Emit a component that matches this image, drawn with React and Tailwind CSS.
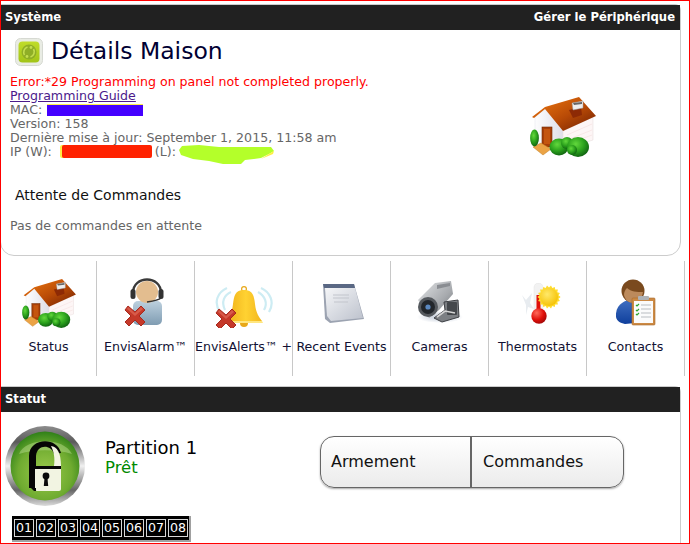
const Cross = ({ x, y, s = 1 }) => (
  <g transform={`translate(${x} ${y}) scale(${s})`}>
    <path d="M-7-10-0-4 6-10 10-6 4 0 10 6 6 10 0 4-6 10-10 6-4 0-10-6Z" fill="#c5392a" stroke="#a82a1e" strokeWidth="1" strokeLinejoin="round" />
    <path d="M-7-9 0-3 6-9 8-7 0 0-8-7Z" fill="#e06a58" opacity=".7" />
  </g>
);

const House = ({ w, h }) => (
  <svg width={w} height={h} viewBox="0 0 66 60">
    <defs>
      <linearGradient id="roof" x1="0" y1="0" x2="1" y2="1">
        <stop offset="0" stopColor="#f07a10" />
        <stop offset=".55" stopColor="#b84a06" />
        <stop offset="1" stopColor="#6e1e02" />
      </linearGradient>
      <linearGradient id="gable" x1="0" y1="0" x2="1" y2="0">
        <stop offset="0" stopColor="#fdfdfe" />
        <stop offset="1" stopColor="#dedee8" />
      </linearGradient>
      <radialGradient id="bush" cx=".4" cy=".35" r=".7">
        <stop offset="0" stopColor="#62d83c" />
        <stop offset=".55" stopColor="#2aa01c" />
        <stop offset="1" stopColor="#0e5c10" />
      </radialGradient>
    </defs>
    <path d="M5 20 15 12 33 34 33 52 5 47Z" fill="url(#gable)" stroke="#e2e2e8" strokeWidth=".5" />
    <path d="M33 34 63 20 63 43 33 52Z" fill="#fdf6f6" stroke="#eadfdf" strokeWidth=".6" />
    <path d="M37 38 62 27M37 43 62 33M37 47 62 38" stroke="#f2d8d8" strokeWidth=".5" />
    <path d="M2 20 15 10 49 0 66 19 33 34 15 12 4 21Z" fill="url(#roof)" />
    <path d="M39 13 51 10 52 18 43 21Z" fill="#8d2a05" />
    <path d="M42 6 53 4 53 11 43 13Z" fill="#eeeeee" stroke="#999" strokeWidth=".5" />
    <path d="M43 6 52 5 52 7 44 8Z" fill="#666" />
    <rect x="12" y="30" width="10" height="20" fill="#a83f08" stroke="#6e2a04" strokeWidth=".6" />
    <path d="M14 32h6v15h-6Z" fill="#c4550f" />
    <path d="M3 50 11 46 21 52 13 58Z" fill="#eba345" stroke="#c07c20" strokeWidth=".5" />
    <ellipse cx="4.5" cy="41" rx="4.4" ry="8.5" fill="url(#bush)" />
    <ellipse cx="29" cy="50" rx="9.5" ry="8.5" fill="url(#bush)" />
    <circle cx="37" cy="46" r="6" fill="url(#bush)" />
    <ellipse cx="48" cy="50" rx="11" ry="10" fill="url(#bush)" />
    <circle cx="42" cy="53" r="5" fill="url(#bush)" />
  </svg>
);

const Support = () => (
  <svg width="40" height="50" viewBox="0 0 40 50" className="-ml-[4px]">
    <defs>
      <linearGradient id="shirt" x1="0" y1="0" x2="0" y2="1">
        <stop offset="0" stopColor="#bcd0de" />
        <stop offset="1" stopColor="#7f9cb2" />
      </linearGradient>
    </defs>
    <rect x="9" y="23" width="29" height="24" rx="5" fill="url(#shirt)" />
    <circle cx="23" cy="14" r="11" fill="#e3bd8f" />
    <path d="M9 15C9-3 37-3 37 15" fill="none" stroke="#3a3a3a" strokeWidth="2.4" />
    <rect x="6.5" y="11" width="5" height="10" rx="2.5" fill="#333" />
    <rect x="34.5" y="11" width="5" height="10" rx="2.5" fill="#333" />
    <path d="M37 20C35 22 30 23 23 24" fill="none" stroke="#333" strokeWidth="1.4" />
    <Cross x={11} y={38} />
  </svg>
);

const Bell = () => (
  <svg width="58" height="42" viewBox="0 0 58 42">
    <defs>
      <linearGradient id="bell" x1="0" y1="0" x2="1" y2="0">
        <stop offset="0" stopColor="#eeae18" />
        <stop offset=".55" stopColor="#ffd232" />
        <stop offset="1" stopColor="#f2b61e" />
      </linearGradient>
    </defs>
    <g fill="none" stroke="#cdecf3" strokeWidth="2.2">
      <path d="M5 26C-2 16 3 6 12 2" />
      <path d="M10 24C6 16 9 9 16 6" />
      <path d="M54 26C60 16 55 6 46 2" />
      <path d="M49 24C53 17 50 10 43 6" />
    </g>
    <circle cx="29" cy="37" r="4" fill="#e8a818" />
    <circle cx="29" cy="3" r="2.4" fill="none" stroke="#e8a818" strokeWidth="1.2" />
    <path d="M29 4C20 4 19 10 18 18 17 27 14 31 11 35H47C44 31 41 27 40 18 39 10 38 4 29 4Z" fill="url(#bell)" />
    <path d="M11 35H47L48 37H10Z" fill="#ffe680" />
    <Cross x={11} y={33} />
  </svg>
);

const Doc = () => (
  <svg width="44" height="42" viewBox="0 0 44 42" className="ml-[4px]">
    <defs>
      <linearGradient id="paper" x1="0" y1="0" x2="1" y2="1">
        <stop offset="0" stopColor="#f5f6f8" />
        <stop offset="1" stopColor="#bcc1cc" />
      </linearGradient>
    </defs>
    <path d="M1 1H32L42 36 8 40 3 36Z" fill="#9ca3b1" />
    <path d="M3 5H33L41 35 9 38 5 33Z" fill="url(#paper)" />
    <path d="M1 1H32L33 5H2Z" fill="#5a6884" />
    <path d="M11 12H27M11 15H27M12 19H26" stroke="#c2c5cc" strokeWidth="1" />
  </svg>
);

const Camera = () => (
  <svg width="46" height="44" viewBox="0 0 46 44">
    <defs>
      <linearGradient id="cam" x1="0" y1="0" x2="1" y2="1">
        <stop offset="0" stopColor="#e4e6e8" />
        <stop offset=".6" stopColor="#a6a9ad" />
        <stop offset="1" stopColor="#6a6e73" />
      </linearGradient>
      <radialGradient id="shade" cx=".5" cy=".5" r=".5">
        <stop offset="0" stopColor="#8e9fb8" stopOpacity=".6" />
        <stop offset="1" stopColor="#8e9fb8" stopOpacity="0" />
      </radialGradient>
    </defs>
    <ellipse cx="23" cy="37" rx="23" ry="6" fill="url(#shade)" />
    <path d="M1 20 18 3 34 1 36 14 22 30 12 38Z" fill="url(#cam)" />
    <path d="M20 5 33 3V6L20 9Z" fill="#8a8d92" />
    <circle cx="11" cy="27" r="10" fill="#55595e" />
    <circle cx="11" cy="27" r="7" fill="#22262b" />
    <circle cx="11" cy="27" r="2.6" fill="#5a88c0" />
    <path d="M17 38 28 30 27 22 41 20 42 37 25 42Z" fill="#7c7f83" stroke="#3e4044" strokeWidth="1" />
    <rect x="30" y="22" width="10" height="13" rx="1" fill="#44474b" />
    <path d="M20 37 28 31 38 33" stroke="#d4d4d4" strokeWidth="1.6" fill="none" />
  </svg>
);

const Thermo = () => {
  const pts = Array.from({ length: 36 }, (_, i) => {
    const r = i % 2 ? 9.6 : 11.6;
    const a = (i * Math.PI) / 18;
    return `${(36 + r * Math.cos(a)).toFixed(1)},${(14 + r * Math.sin(a)).toFixed(1)}`;
  }).join(" ");
  return (
    <svg width="50" height="44" viewBox="0 0 50 44">
      <defs>
        <radialGradient id="sun" cx=".4" cy=".35" r=".7">
          <stop offset="0" stopColor="#ffe96a" />
          <stop offset="1" stopColor="#f5c000" />
        </radialGradient>
        <radialGradient id="bulb" cx=".35" cy=".3" r=".75">
          <stop offset="0" stopColor="#ff6a5a" />
          <stop offset=".6" stopColor="#e0100a" />
          <stop offset="1" stopColor="#a00808" />
        </radialGradient>
      </defs>
      <path d="M9 12 13 17 19 10 17 20 21 26 15 24 13 32 13 22Z" fill="#e8ecf0" />
      <rect x="21" y="0" width="9" height="30" rx="4.5" fill="#f2f2f2" stroke="#e4e4e4" strokeWidth=".5" />
      <rect x="23.5" y="12" width="4" height="20" fill="#e0100a" />
      <circle cx="26" cy="33" r="7.7" fill="url(#bulb)" />
      <polygon points={pts} fill="#ffdc2e" />
      <circle cx="36" cy="14" r="9" fill="url(#sun)" />
    </svg>
  );
};

const Contact = () => (
  <svg width="42" height="48" viewBox="0 0 42 48">
    <defs>
      <linearGradient id="suit" x1="0" y1="0" x2="0" y2="1">
        <stop offset="0" stopColor="#3f6ec0" />
        <stop offset="1" stopColor="#0f3f9c" />
      </linearGradient>
    </defs>
    <path d="M1 39C0 28 8 23 14 22H26L30 44 10 46C5 45 2 43 1 39Z" fill="url(#suit)" />
    <circle cx="18" cy="13" r="11.5" fill="#7a4a1e" />
    <path d="M9 17C10 22 14 25 18 25 23 25 27 21 28 14 22 14 16 14 12 10 10 12 9 14 9 17Z" fill="#bc8a5c" />
    <rect x="17" y="20" width="23" height="27" rx="1" fill="#cc8a45" stroke="#a86a2a" strokeWidth=".6" />
    <rect x="19" y="23" width="19" height="22" fill="#fbfbfb" />
    <rect x="23" y="18" width="11" height="4" rx="1" fill="#aeb2b6" />
    <path d="M26 27H36M26 31H36M26 35H36M26 39H36" stroke="#b9bdc1" strokeWidth="1" />
    <path d="M21 27 22 28 24 26M21 32 22 33 24 31M21 36 22 37 24 35" stroke="#2fa52f" strokeWidth="1.2" fill="none" />
  </svg>
);

const Lock = () => (
  <svg width="80" height="80" viewBox="0 0 80 80">
    <defs>
      <linearGradient id="ring" x1="0" y1="0" x2="0" y2="1">
        <stop offset="0" stopColor="#8c8c8c" />
        <stop offset=".2" stopColor="#5a5a5a" />
        <stop offset=".5" stopColor="#f0f0f0" />
        <stop offset=".8" stopColor="#666" />
        <stop offset="1" stopColor="#dcdcdc" />
      </linearGradient>
      <radialGradient id="grn" cx=".5" cy=".6" r=".6">
        <stop offset="0" stopColor="#9ccb4c" />
        <stop offset=".65" stopColor="#6fab30" />
        <stop offset="1" stopColor="#2f8018" />
      </radialGradient>
    </defs>
    <circle cx="40" cy="40" r="40" fill="url(#ring)" />
    <circle cx="40" cy="40" r="34.5" fill="url(#grn)" />
    <path d="M14 28C20 12 58 10 67 28 50 23 30 23 14 28Z" fill="#b5d98a" opacity=".5" />
    <path d="M24 62V30C24 12 52 10 56 27L49 28C46 18 32 18 31 30V62Z" fill="#060606" />
    <path d="M46 20C52 21 56 26 56 40H49C50 32 49 26 46 20Z" fill="#f2f4e2" />
    <rect x="28" y="40" width="28" height="3" fill="#060606" />
    <path d="M30 43H56V63C56 64 55 65 54 65H32C31 65 30 64 30 63Z" fill="#f2f4e2" />
    <path d="M26 62H31V65H29Z" fill="#060606" />
    <circle cx="41" cy="50" r="3.4" fill="#0a0a0a" />
    <path d="M39.6 51H42.4L43.2 60H38.8Z" fill="#0a0a0a" />
  </svg>
);

const Apps = () => (
  <svg width="28" height="28" viewBox="0 0 28 28">
    <defs>
      <linearGradient id="app" x1="0" y1="0" x2="0" y2="1">
        <stop offset="0" stopColor="#c0dc2a" />
        <stop offset="1" stopColor="#a2c418" />
      </linearGradient>
    </defs>
    <rect x=".5" y=".5" width="27" height="27" rx="5" fill="#e9ece4" stroke="#d6d9d2" />
    <rect x="3.5" y="3.5" width="21" height="21" rx="4" fill="url(#app)" />
    <circle cx="14" cy="14" r="7.5" fill="#8fae26" />
    <path d="M12.5 9A5.5 5.5 0 0 0 9.5 17M15.5 19A5.5 5.5 0 0 0 18.5 11" fill="none" stroke="#c4de50" strokeWidth="1.6" />
    <circle cx="16" cy="9.5" r="1.4" fill="#c4de50" />
    <circle cx="12" cy="18.5" r="1.4" fill="#c4de50" />
  </svg>
);

const GreenScribble = () => (
  <svg width="96" height="20" viewBox="0 0 96 20" className="inline-block align-top">
    <path d="M0 5 3 1 20 0 40 2 60 2 92 2 95 6 90 9 82 13 66 15 62 19 44 19 30 16 14 14 2 10Z" fill="#b4ff2a" />
    <path d="M90 9 95 6 94 9 82 14Z" fill="#ffee44" />
  </svg>
);

const NAV = [
  { label: "Status", icon: <House w={54} h={49} />, pad: "pt-[18px]", w: "w-[96px]" },
  { label: "EnvisAlarm™", icon: <Support />, pad: "pt-[17px]", w: "w-[98px]" },
  { label: "EnvisAlerts™ +", icon: <Bell />, pad: "pt-[25px]", w: "w-[98px]" },
  { label: "Recent Events", icon: <Doc />, pad: "pt-[22px]", w: "w-[98px]" },
  { label: "Cameras", icon: <Camera />, pad: "pt-[19px]", w: "w-[98px]" },
  { label: "Thermostats", icon: <Thermo />, pad: "pt-[22px]", w: "w-[98px]" },
  { label: "Contacts", icon: <Contact />, pad: "pt-[17px]", w: "w-[98px]" },
];

const ZONES = ["01", "02", "03", "04", "05", "06", "07", "08"];

export default function App() {
  return (
    <div className="w-[690px] h-[544px] border border-[#ff0000] bg-white overflow-hidden font-['DejaVu_Sans',Verdana,sans-serif]">
      <section className="relative -ml-px mt-[3px] w-[681px] h-[252px] border border-[#cccccc] rounded-b-[14px] rounded-tr-[6px]">
        <div className="h-[25px] bg-[#212121] flex items-center justify-between pt-[1px] pl-[4px] pr-[5px] text-[11.6px] font-bold text-white">
          <span>Système</span>
          <span>Gérer le Périphérique</span>
        </div>
        <div className="flex items-center pl-[14px] pt-[8px] h-[36px]">
          <Apps />
          <h1 className="ml-[8px] -mt-[3px] text-[23.5px] leading-[28px] text-[#000033]">Détails Maison</h1>
        </div>
        <div className="mt-[9px] pl-[9px] text-[12.6px] leading-[14px] text-[#666666]">
          <div className="text-[#ff0000]">Error:*29 Programming on panel not completed properly.</div>
          <div className="text-[#4b1a8b] underline">Programming Guide</div>
          <div className="flex items-center h-[14px]">
            MAC:
            <span className="ml-[5px] w-[96px] h-[11px] bg-[#4400ff] shadow-[0_-1px_0_#ffee44]" />
          </div>
          <div>Version: 158</div>
          <div>Dernière mise à jour: September 1, 2015, 11:58 am</div>
          <div className="flex h-[14px]">
            IP (W):
            <span className="ml-[10px] w-[90px] h-[13px] bg-[#ff2200] rounded-[2px] shadow-[-2px_0_0_#ffee44]" />
            <span className="ml-[3px]">(L):</span>
            <span className="ml-[3px] h-[20px]"><GreenScribble /></span>
          </div>
        </div>
        <div className="mt-[27px] pl-[14px] text-[14px] leading-[18px] text-[#111111]">Attente de Commandes</div>
        <div className="mt-[15px] pl-[9px] text-[12.6px] leading-[14px] text-[#666666]">Pas de commandes en attente</div>
        <div className="absolute left-[529px] top-[92px]">
          <House w={66} h={60} />
        </div>
      </section>

      <nav className="mt-[5px] flex h-[115px]">
        {NAV.map((n) => (
          <div key={n.label} className={`${n.w} shrink-0 border-r border-[#c8c8c8] flex flex-col items-center`}>
            <div className={`h-[78px] ${n.pad} flex justify-center`}>{n.icon}</div>
            <div className="mt-[1px] text-[12.6px] leading-[14px] whitespace-nowrap text-[#111133]">{n.label}</div>
          </div>
        ))}
      </nav>

      <section className="-ml-px mt-[10px] w-[681px] h-[170px] border-t border-r border-[#cccccc] rounded-tr-[6px]">
        <div className="h-[25px] bg-[#212121] flex items-center pt-[1px] pl-[5px] text-[11.6px] font-bold text-white">Statut</div>
        <div className="flex pl-[5px] pt-[14px]">
          <Lock />
          <div className="w-[235px] pl-[20px] pt-[12px] shrink-0">
            <div className="text-[18px] leading-[20px] text-black">Partition 1</div>
            <div className="text-[16.5px] leading-[20px] text-[#008a00]">Prêt</div>
          </div>
          <div className="mt-[10px] flex h-[52px] w-[304px] rounded-[14px] border border-[#666666] bg-gradient-to-b from-white to-[#ebebeb] shadow-[0_1px_2px_rgba(0,0,0,0.35)] text-[16px] text-[#111111]">
            <div className="w-[151px] border-r-2 border-[#666666] flex items-center pl-[10px]">Armement</div>
            <div className="flex items-center pl-[11px]">Commandes</div>
          </div>
        </div>
        <div className="ml-[12px] mt-[10px] w-[179px] h-[26px] bg-black border-r-[2px] border-b-[2px] border-[#a0a0a0] flex gap-[2px] pl-[2px] pt-[3px]">
          {ZONES.map((z) => (
            <span key={z} className="w-[20px] h-[18px] border border-[#d8d8d8] text-white text-[12.6px] leading-[16px] text-center">{z}</span>
          ))}
        </div>
      </section>
    </div>
  );
}
